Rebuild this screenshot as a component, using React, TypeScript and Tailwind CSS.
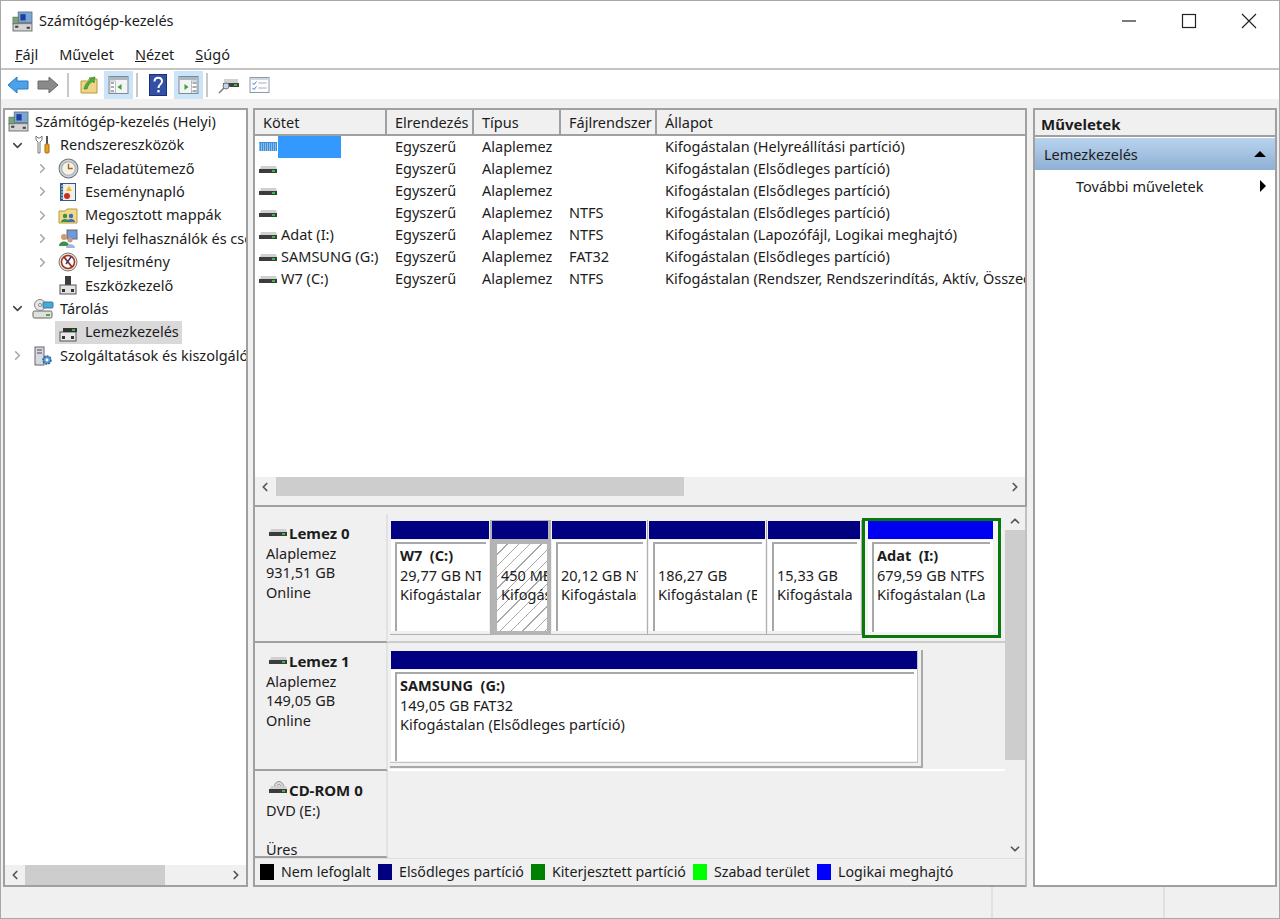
import { ChevronDown, ChevronRight, ChevronLeft, ChevronUp } from "lucide-react";

// ============================================
// Icons
// ============================================

const DriveIcon = ({ cd = false }: { cd?: boolean }) => (
  <svg width="20" height="16" viewBox="0 0 20 16" className="shrink-0">
    {cd && (
      <g>
        <circle cx="11" cy="5" r="4.5" fill="#d8d8d8" stroke="#9a9a9a" />
        <circle cx="11" cy="5" r="1.5" fill="#fff" stroke="#9a9a9a" />
      </g>
    )}
    <path d="M2 8 L3 5 H18 L19 8 Z" fill="#d0d0d0" />
    <rect x="1" y="8" width="18" height="4" fill="#3c3c3c" />
    <rect x="14" y="9" width="3" height="2" fill="#30c040" />
  </svg>
);

const BlueDriveIcon = () => (
  <svg width="20" height="16" viewBox="0 0 20 16" className="shrink-0">
    <rect x="1" y="3" width="18" height="9" fill="#3f8fd8" />
    <path d="M1 5h18M1 7h18M1 9h18M1 11h18" stroke="#d6ebfb" strokeDasharray="1 1" />
  </svg>
);

const ComputerIcon = () => (
  <svg width="21" height="21" viewBox="0 0 20 20" className="shrink-0">
    <rect x="6" y="1" width="13" height="10" fill="#7aa7d8" stroke="#6a7b8c" />
    <rect x="8" y="3" width="5" height="6" fill="#1f3f9f" />
    <rect x="1" y="12" width="18" height="7" fill="#d4d4d4" stroke="#777" />
    <rect x="3" y="14" width="3" height="2" fill="#444" />
    <rect x="14" y="15" width="3" height="2" fill="#444" />
    <rect x="1" y="6" width="5" height="6" fill="#6cae6c" stroke="#777" />
  </svg>
);

const ToolsIcon = () => (
  <svg width="18" height="20" viewBox="0 0 18 20" className="shrink-0">
    <path d="M2 1 V5 L4 7 V18 H6 V7 L8 5 V1 L6 3 H4 Z" fill="#fff" stroke="#777" />
    <rect x="12" y="1" width="2" height="8" fill="#555" />
    <rect x="11" y="9" width="4" height="9" rx="1" fill="#e8a020" stroke="#a56c10" />
  </svg>
);

const ClockIcon = () => (
  <svg width="21" height="21" viewBox="0 0 20 20" className="shrink-0">
    <circle cx="10" cy="10" r="9" fill="#c8d4e0" stroke="#777" />
    <circle cx="10" cy="10" r="6.5" fill="#f6f2e4" stroke="#aaa" />
    <path d="M10 5.5 V10 H14" stroke="#a06a10" strokeWidth="1.3" fill="none" />
  </svg>
);

const LogIcon = () => (
  <svg width="20" height="20" viewBox="0 0 20 20" className="shrink-0">
    <rect x="2" y="1" width="16" height="18" fill="#2f5a90" />
    <rect x="5" y="2" width="12" height="16" fill="#f4efe0" />
    <path d="M11 4 L14 9 H8 Z" fill="#e8c020" />
    <circle cx="9" cy="14" r="3" fill="#c83020" />
    <path d="M3 4h3M3 7h3M3 10h3M3 13h3M3 16h3" stroke="#cdd" />
  </svg>
);

const SharedIcon = () => (
  <svg width="20" height="20" viewBox="0 0 20 20" className="shrink-0">
    <path d="M1 6 H7 L9 4 H19 V18 H1 Z" fill="#f1d98a" stroke="#b89a40" />
    <circle cx="7" cy="11" r="2.2" fill="#3d8f4a" />
    <path d="M3 17 C3 13 11 13 11 17 Z" fill="#3d8f4a" />
    <circle cx="13" cy="11" r="2.2" fill="#3a6fb0" />
    <path d="M9 17 C9 13 17 13 17 17 Z" fill="#3a6fb0" />
  </svg>
);

const UsersIcon = () => (
  <svg width="20" height="20" viewBox="0 0 20 20" className="shrink-0">
    <rect x="9" y="1" width="10" height="9" fill="#6f9bd6" stroke="#667" />
    <circle cx="6" cy="8" r="3" fill="#d09a70" />
    <path d="M1 17 C1 11 11 11 11 17 Z" fill="#3d8f4a" />
    <circle cx="12" cy="11" r="2.5" fill="#c89a80" />
    <path d="M8 19 C8 14 17 14 17 19 Z" fill="#9cb8e0" />
  </svg>
);

const PerfIcon = () => (
  <svg width="20" height="20" viewBox="0 0 20 20" className="shrink-0">
    <circle cx="10" cy="10" r="9" fill="#e8e4d8" stroke="#777" />
    <circle cx="10" cy="10" r="6.5" fill="#fff" stroke="#a03020" strokeWidth="1.5" />
    <path d="M6 5 L14 15" stroke="#a03020" strokeWidth="2" />
    <path d="M13 5 L8 12" stroke="#2a3f80" strokeWidth="1.5" />
  </svg>
);

const DeviceIcon = () => (
  <svg width="20" height="20" viewBox="0 0 20 20" className="shrink-0">
    <rect x="7" y="1" width="6" height="9" fill="#3c3c3c" />
    <rect x="2" y="10" width="16" height="9" fill="#e4e4e4" stroke="#555" />
    <rect x="4" y="14" width="3" height="3" fill="#333" />
    <rect x="13" y="14" width="3" height="3" fill="#333" />
  </svg>
);

const StorageIcon = () => (
  <svg width="22" height="22" viewBox="0 0 22 22" className="shrink-0">
    <rect x="1" y="13" width="19" height="7" rx="1.5" fill="#dde3d8" stroke="#666" />
    <rect x="14" y="16" width="4" height="2" fill="#50a050" />
    <circle cx="8" cy="7" r="5.5" fill="#e6e6e6" stroke="#888" />
    <circle cx="8" cy="7" r="1.5" fill="#fff" stroke="#888" />
    <rect x="11" y="4" width="10" height="6" rx="1" fill="#49a9d6" stroke="#3b7a9c" />
  </svg>
);

const DiskMgmtIcon = () => (
  <svg width="20" height="20" viewBox="0 0 20 20" className="shrink-0">
    <rect x="2" y="10" width="16" height="9" fill="#e8e8e8" stroke="#555" />
    <rect x="4" y="14" width="3" height="3" fill="#333" />
    <rect x="13" y="14" width="3" height="3" fill="#333" />
    <rect x="5" y="6" width="14" height="4" fill="#333" />
    <rect x="14" y="7" width="3" height="2" fill="#30c040" />
  </svg>
);

const ServicesIcon = () => (
  <svg width="20" height="20" viewBox="0 0 20 20" className="shrink-0">
    <rect x="2" y="1" width="9" height="18" fill="#d6dadf" stroke="#666" />
    <path d="M4 4h5M4 7h5" stroke="#445" />
    <circle cx="14" cy="14" r="4" fill="#5d9ad8" stroke="#2c5f92" strokeWidth="1.5" strokeDasharray="2 1" />
    <circle cx="14" cy="14" r="1.4" fill="#fff" />
  </svg>
);

const ArrowIcon = ({ back, on }: { back?: boolean; on: boolean }) => (
  <svg width="22" height="20" viewBox="0 0 22 20">
    <path
      d={back ? "M1 10 L10 2 V6 H21 V14 H10 V18 Z" : "M21 10 L12 2 V6 H1 V14 H12 V18 Z"}
      fill={on ? "#4aa3e8" : "#8a8a8a"}
      stroke={on ? "#2a78c0" : "#6a6a6a"}
      strokeLinejoin="round"
    />
  </svg>
);

const FolderUpIcon = () => (
  <svg width="20" height="20" viewBox="0 0 20 20">
    <path d="M2 6 H9 L10 4 H18 V18 H2 Z" fill="#f0d488" stroke="#b89a40" />
    <path d="M5 14 C6 9 9 6 12 5 L10 3 L16 2 L15 8 L13.5 6.5 C11 8 9 10 8 14 Z" fill="#4caf3c" stroke="#2e7f25" strokeWidth="0.6" />
  </svg>
);

const PaneIcon = ({ right }: { right?: boolean }) => (
  <svg width="21" height="18" viewBox="0 0 20 18">
    <rect x="0.5" y="0.5" width="19" height="17" fill="#f4f4f4" stroke="#7a8a96" />
    <rect x="1" y="1" width="18" height="3" fill="#aab8c4" />
    <rect x={right ? 13 : 1.5} y="5" width="5.5" height="12" fill="#fff" stroke="#8c9aa6" strokeWidth="0.6" />
    <path d={right ? "M6 8 L10 11 L6 14 Z" : "M13 8 L9 11 L13 14 Z"} fill="#3aa040" />
    <path d={right ? "M14 7h4M14 11h4M14 15h4" : "M2.5 7h3M2.5 11h3M2.5 15h3"} stroke="#556" />
  </svg>
);

const HelpIcon = () => (
  <svg width="18" height="22" viewBox="0 0 18 22">
    <rect x="0.5" y="0.5" width="17" height="21" fill="#3350a8" stroke="#1d2f70" />
    <path d="M5.5 7.5 C5.5 2.5 13 2.5 13 7.5 C13 10 9.5 10.5 9.5 14" stroke="#fff" strokeWidth="2" fill="none" />
    <rect x="8.4" y="16" width="2.2" height="2.4" fill="#fff" />
  </svg>
);

const ScanIcon = () => (
  <svg width="22" height="18" viewBox="0 0 22 18">
    <path d="M6 3 H20 V7 H6 Z" fill="#d0d0d0" />
    <rect x="5" y="7" width="16" height="4" fill="#404040" />
    <rect x="16" y="8" width="3" height="2" fill="#30c040" />
    <circle cx="8" cy="10" r="3" fill="#bcd6ea" stroke="#777" />
    <path d="M6 12 L1 17" stroke="#777" strokeWidth="1.5" />
  </svg>
);

const ChecklistIcon = () => (
  <svg width="21" height="16" viewBox="0 0 20 16">
    <rect x="0.5" y="0.5" width="19" height="15" fill="#fdfdfd" stroke="#8c9aa6" />
    <rect x="1" y="1" width="18" height="2" fill="#d0d8e0" />
    <path d="M3 6 L4.5 7.5 L7 4.5M3 11 L4.5 12.5 L7 9.5" stroke="#3a7fd0" fill="none" />
    <path d="M9 6h8M9 11h8" stroke="#aab" />
  </svg>
);

// ============================================
// Tree
// ============================================

type TreeItem = { label: string; depth: 0 | 1 | 2; arrow?: "open" | "closed"; icon: React.ReactNode; selected?: boolean };

const treeItems: TreeItem[] = [
  { label: "Számítógép-kezelés (Helyi)", depth: 0, icon: <ComputerIcon /> },
  { label: "Rendszereszközök", depth: 1, arrow: "open", icon: <ToolsIcon /> },
  { label: "Feladatütemező", depth: 2, arrow: "closed", icon: <ClockIcon /> },
  { label: "Eseménynapló", depth: 2, arrow: "closed", icon: <LogIcon /> },
  { label: "Megosztott mappák", depth: 2, arrow: "closed", icon: <SharedIcon /> },
  { label: "Helyi felhasználók és csoportok", depth: 2, arrow: "closed", icon: <UsersIcon /> },
  { label: "Teljesítmény", depth: 2, arrow: "closed", icon: <PerfIcon /> },
  { label: "Eszközkezelő", depth: 2, icon: <DeviceIcon /> },
  { label: "Tárolás", depth: 1, arrow: "open", icon: <StorageIcon /> },
  { label: "Lemezkezelés", depth: 2, icon: <DiskMgmtIcon />, selected: true },
  { label: "Szolgáltatások és kiszolgálói alkalmazások", depth: 1, arrow: "closed", icon: <ServicesIcon /> },
];

const TreeRow = ({ item }: { item: TreeItem }) => {
  const pad = item.depth === 2 ? "pl-[27px]" : "pl-[2px]";
  return (
    <div className={`flex h-[23.4px] items-center whitespace-nowrap ${pad}`}>
      {item.depth > 0 && (
        <span className="mr-[5px] flex w-[20px] shrink-0 items-center justify-center">
          {item.arrow === "open" && <ChevronDown size={15} strokeWidth={2.5} className="text-[#444]" />}
          {item.arrow === "closed" && <ChevronRight size={15} strokeWidth={2.5} className="text-[#a6a6a6]" />}
        </span>
      )}
      <span className={`flex items-center ${item.selected ? "-ml-[2px] h-[23px] w-[127px] bg-[#d9d9d9] pl-[2px]" : ""}`}>
        <span className="flex w-[22px] shrink-0 items-center justify-center">{item.icon}</span>
        <span className="ml-[6px]">{item.label}</span>
      </span>
    </div>
  );
};

// ============================================
// Volume list
// ============================================

const cols = [
  { label: "Kötet", w: "w-[132px]" },
  { label: "Elrendezés", w: "w-[87px]" },
  { label: "Típus", w: "w-[87px]" },
  { label: "Fájlrendszer", w: "w-[96px]" },
  { label: "Állapot", w: "flex-1" },
];

const volumes = [
  { name: "", fs: "", status: "Kifogástalan (Helyreállítási partíció)", selected: true },
  { name: "", fs: "", status: "Kifogástalan (Elsődleges partíció)" },
  { name: "", fs: "", status: "Kifogástalan (Elsődleges partíció)" },
  { name: "", fs: "NTFS", status: "Kifogástalan (Elsődleges partíció)" },
  { name: "Adat (I:)", fs: "NTFS", status: "Kifogástalan (Lapozófájl, Logikai meghajtó)" },
  { name: "SAMSUNG (G:)", fs: "FAT32", status: "Kifogástalan (Elsődleges partíció)" },
  { name: "W7 (C:)", fs: "NTFS", status: "Kifogástalan (Rendszer, Rendszerindítás, Aktív, Összeomlási kiírás)" },
];

// ============================================
// Disk map
// ============================================

type Partition = { w: string; title?: string; size: string; status: string; hatched?: boolean; logical?: boolean };

const disk0: Partition[] = [
  { w: "w-[101px]", title: "W7  (C:)", size: "29,77 GB NTFS", status: "Kifogástalan (Rendszer)" },
  { w: "w-[60px]", size: "450 MB", status: "Kifogástalan", hatched: true },
  { w: "w-[97px]", size: "20,12 GB NTFS", status: "Kifogástalan (Elsődleges)" },
  { w: "w-[119px]", size: "186,27 GB", status: "Kifogástalan (Elsődleges)" },
  { w: "w-[95px]", size: "15,33 GB", status: "Kifogástalan (Elsődleges)" },
  { w: "w-[139px]", title: "Adat  (I:)", size: "679,59 GB NTFS", status: "Kifogástalan (Lapozófájl)", logical: true },
];

const PartitionText = ({ p }: { p: Partition }) => (
  <div className="overflow-hidden whitespace-pre leading-[19.5px]">
    <div className="h-[19.5px] font-bold">{p.title}</div>
    <div>{p.size}</div>
    <div>{p.status}</div>
  </div>
);

const PartitionBody = ({ p }: { p: Partition }) => {
  if (p.hatched) {
    return (
      <>
        <div className="-mx-[1px] flex shrink-0 px-[1px]">
          <div className="h-[18px] w-[56px] bg-[#000080]" />
        </div>
        <div className="min-h-0 flex-1 pt-[5px] pl-[5px] pr-[4px] pb-[3px]">
          <div className="h-full bg-[repeating-linear-gradient(135deg,#fff_0px,#fff_7px,#a8a8a8_7px,#a8a8a8_8px)] pl-[4px] pt-[2px]">
            <PartitionText p={p} />
          </div>
        </div>
      </>
    );
  }
  return (
    <>
      <div className={`h-[18px] shrink-0 ${p.logical ? "bg-[#0000f0]" : "bg-[#000080]"}`} />
      <div className="mt-[1px] flex min-h-0 flex-1 flex-col bg-white pl-[4px] pr-[3px] pt-[2px]">
        <div className="min-h-0 flex-1 overflow-hidden border-t-2 border-l-2 border-[#a8a8a8] bg-white pl-[3px] pr-[5px] pt-[2px]">
          <PartitionText p={p} />
        </div>
      </div>
    </>
  );
};

const PartitionBox = ({ p }: { p: Partition }) => {
  if (p.logical) {
    return (
      <div className={`-mt-[2px] flex h-[120px] shrink-0 flex-col border-[3px] border-[#087a0c] bg-[#f4f4f4] pl-[3px] pr-[5px] pb-[3px] ${p.w}`}>
        <PartitionBody p={p} />
      </div>
    );
  }
  if (p.hatched) {
    return (
      <div className={`flex h-[115px] shrink-0 flex-col bg-[#b4b4b4] pt-[1px] pl-[1px] pb-[1px] ${p.w}`}>
        <PartitionBody p={p} />
      </div>
    );
  }
  return (
    <div className={`flex h-[115px] shrink-0 flex-col border-r border-b border-[#b0b0b0] bg-[#f0f0f0] pt-[1px] pl-[1px] pr-[1px] pb-[3px] ${p.w}`}>
      <PartitionBody p={p} />
    </div>
  );
};

const DiskLabel = ({ name, lines, cd, pt }: { name: string; lines: string[]; cd?: boolean; pt: string }) => (
  <div className={`w-[133px] shrink-0 self-stretch border-r-2 border-b-2 border-r-[#e2e2e2] border-b-[#a0a0a0] bg-[#f0f0f0] pl-[11px] leading-[19.5px] ${pt}`}>
    <div className="flex items-center">
      <span className="-mt-[4px] ml-[2px]">
        <DriveIcon cd={cd} />
      </span>
      <span className="ml-[1px] text-[15px] font-bold">{name}</span>
    </div>
    {lines.map((line, i) => (
      <div key={i} className="h-[19.5px]">
        {line}
      </div>
    ))}
  </div>
);

const legend = [
  { color: "bg-black", label: "Nem lefoglalt" },
  { color: "bg-[#000080]", label: "Elsődleges partíció" },
  { color: "bg-[#008000]", label: "Kiterjesztett partíció" },
  { color: "bg-[#00ff00]", label: "Szabad terület" },
  { color: "bg-[#0000ff]", label: "Logikai meghajtó" },
];

// ============================================
// Main Component
// ============================================

export default function App() {
  return (
    <div className="flex h-[919px] w-[1280px] flex-col overflow-hidden border border-[#a8a8a8] bg-[#f0f0f0] font-['Noto_Sans','Open_Sans',sans-serif] text-[14.5px] text-[#1c1c1c]">
      {/* Title bar */}
      <div className="flex h-[40px] shrink-0 items-center bg-white pl-[11px]">
        <ComputerIcon />
        <span className="-mt-[1px] ml-[6px]">Számítógép-kezelés</span>
        <div className="ml-auto flex items-center">
          <svg width="16" height="16" viewBox="0 0 16 16" className="mr-[44px]"><path d="M1 8h14" stroke="#222" strokeWidth="1.2" /></svg>
          <svg width="16" height="16" viewBox="0 0 16 16" className="mr-[44px]"><rect x="1.5" y="1.5" width="13" height="13" fill="none" stroke="#222" strokeWidth="1.2" /></svg>
          <svg width="16" height="16" viewBox="0 0 16 16" className="mr-[22px]"><path d="M1 1l14 14M15 1L1 15" stroke="#222" strokeWidth="1.2" /></svg>
        </div>
      </div>

      {/* Menu */}
      <div className="flex h-[29px] shrink-0 items-center gap-[21px] border-b-2 border-[#c4c4c4] bg-white pl-[14px]">
        <span><u>F</u>ájl</span>
        <span>Mű<u>v</u>elet</span>
        <span><u>N</u>ézet</span>
        <span><u>S</u>úgó</span>
      </div>

      {/* Toolbar */}
      <div className="flex h-[29px] shrink-0 items-center bg-white pl-[6px]">
        <ArrowIcon back on />
        <span className="ml-[8px]"><ArrowIcon on={false} /></span>
        <span className="ml-[8px] h-[24px] w-[2px] bg-[#c8c8c8]" />
        <span className="ml-[10px]"><FolderUpIcon /></span>
        <span className="ml-[5px] flex h-[28px] w-[29px] items-center justify-center bg-[#cce4f7]"><PaneIcon /></span>
        <span className="ml-[3px] h-[24px] w-[2px] bg-[#c8c8c8]" />
        <span className="ml-[11px]"><HelpIcon /></span>
        <span className="ml-[7px] flex h-[28px] w-[29px] items-center justify-center bg-[#cce4f7]"><PaneIcon right /></span>
        <span className="ml-[3px] h-[24px] w-[2px] bg-[#c8c8c8]" />
        <span className="ml-[10px]"><ScanIcon /></span>
        <span className="ml-[9px]"><ChecklistIcon /></span>
      </div>

      {/* Panes */}
      <div className="flex min-h-0 flex-1 gap-[5px] px-[2px] pt-[9px]">
        {/* Left tree */}
        <div className="flex w-[245px] shrink-0 flex-col overflow-hidden border-2 border-[#a0a0a0] bg-white">
          <div className="min-h-0 flex-1 overflow-hidden">
            {treeItems.map((item) => (
              <TreeRow key={item.label} item={item} />
            ))}
          </div>
          <div className="flex h-[20px] shrink-0 items-center bg-[#f0f0f0]">
            <ChevronLeft size={14} strokeWidth={3} className="ml-[3px] text-[#555]" />
            <div className="ml-[3px] h-[20px] w-[140px] bg-[#cdcdcd]" />
            <ChevronRight size={14} strokeWidth={3} className="ml-auto mr-[3px] text-[#555]" />
          </div>
        </div>

        {/* Center */}
        <div className="flex w-[774px] shrink-0 flex-col">
          {/* Volume list */}
          <div className="flex h-[399px] shrink-0 flex-col border-2 border-[#a0a0a0] bg-white">
            <div className="flex h-[26px] shrink-0 border-b-2 border-[#a0a0a0] bg-[#f0f0f0]">
              {cols.map((c) => (
                <div key={c.label} className={`flex items-center border-r-2 border-[#a0a0a0] pl-[8px] pt-[2px] last:border-r-0 ${c.w}`}>
                  {c.label}
                </div>
              ))}
            </div>
            <div className="min-h-0 flex-1 overflow-hidden">
              {volumes.map((v, i) => (
                <div key={i} className="flex h-[22px] items-center whitespace-nowrap">
                  <div className="flex w-[132px] items-center pl-[3px]">
                    {v.selected ? <BlueDriveIcon /> : <DriveIcon />}
                    {v.selected ? (
                      <span className="h-[22px] w-[63px] bg-[#3399ff]" />
                    ) : (
                      <span className="ml-[3px]">{v.name}</span>
                    )}
                  </div>
                  <div className="w-[87px] pl-[8px]">Egyszerű</div>
                  <div className="w-[87px] pl-[8px]">Alaplemez</div>
                  <div className="w-[96px] pl-[8px]">{v.fs}</div>
                  <div className="min-w-0 flex-1 overflow-hidden pl-[8px]">{v.status}</div>
                </div>
              ))}
            </div>
            <div className="flex h-[28px] shrink-0 items-start bg-[#f0f0f0]">
              <ChevronLeft size={14} strokeWidth={3} className="ml-[3px] mt-[3px] text-[#555]" />
              <div className="ml-[4px] h-[19px] w-[408px] bg-[#cdcdcd]" />
              <ChevronRight size={14} strokeWidth={3} className="ml-auto mr-[3px] mt-[3px] text-[#555]" />
            </div>
          </div>

          {/* Disk map */}
          <div className="flex min-h-0 flex-1 flex-col border-x-2 border-b-2 border-l-[#a0a0a0] border-r-[#c0c0c0] border-b-[#a0a0a0] bg-[#f0f0f0] pt-[7px]">
            <div className="flex min-h-0 flex-1">
              <div className="min-w-0 flex-1 overflow-hidden">
                <div className="flex h-[129px]">
                  <DiskLabel name="Lemez 0" pt="pt-[10px]" lines={["Alaplemez", "931,51 GB", "Online"]} />
                  <div className="min-w-0 flex-1 border-b-2 border-[#cccccc] pl-[2px] pt-[6px]">
                    <div className="flex items-start">
                      {disk0.map((p, i) => (
                        <PartitionBox key={i} p={p} />
                      ))}
                    </div>
                  </div>
                </div>
                <div className="flex h-[128px]">
                  <DiskLabel name="Lemez 1" pt="pt-[9px]" lines={["Alaplemez", "149,05 GB", "Online"]} />
                  <div className="min-w-0 flex-1 border-b-2 border-white pl-[2px] pt-[7px]">
                    <div className="h-[118px] w-[533px] border-r-2 border-b-2 border-[#a8a8a8] pr-[3px] pb-[3px]">
                      <div className="h-full border-r border-b border-[#c4c4c4]">
                        <div className="flex h-full flex-col p-[1px] pr-0">
                          <PartitionBody p={{ w: "", title: "SAMSUNG  (G:)", size: "149,05 GB FAT32", status: "Kifogástalan (Elsődleges partíció)" }} />
                        </div>
                      </div>
                    </div>
                  </div>
                </div>
                <div className="flex h-[87px]">
                  <DiskLabel name="CD-ROM 0" pt="pt-[10px] border-b-0" cd lines={["DVD (E:)", "", "Üres"]} />
                </div>
              </div>
              <div className="flex w-[20px] shrink-0 flex-col items-center bg-[#f0f0f0]">
                <ChevronUp size={14} strokeWidth={3} className="text-[#555]" />
                <div className="mt-[2px] h-[230px] w-full bg-[#cdcdcd]" />
                <ChevronDown size={14} strokeWidth={3} className="mt-auto mb-[2px] text-[#555]" />
              </div>
            </div>
            <div className="flex h-[27px] shrink-0 items-center gap-[7px] border-t border-[#e0e0e0] bg-[#f0f0f0] pl-[5px] text-[14.2px]">
              {legend.map((l) => (
                <div key={l.label} className="flex items-center gap-[7px]">
                  <span className={`h-[16px] w-[14px] ${l.color}`} />
                  <span>{l.label}</span>
                </div>
              ))}
            </div>
          </div>
        </div>

        {/* Actions */}
        <div className="ml-[1px] flex min-w-0 flex-1 flex-col border-2 border-[#a0a0a0] bg-white">
          <div className="flex h-[27px] shrink-0 items-center border-b-2 border-[#a0a0a0] bg-[#f0f0f0] pl-[6px] pt-[3px] text-[15px] font-bold">Műveletek</div>
          <div className="mt-[1px] flex h-[32px] shrink-0 items-center justify-between bg-gradient-to-b from-[#b9d3ee] to-[#8eb0d4] pl-[9px] pr-[9px]">
            <span className="pt-[2px]">Lemezkezelés</span>
            <span className="h-0 w-0 border-x-[6px] border-b-[6px] border-x-transparent border-b-black" />
          </div>
          <div className="flex h-[31px] shrink-0 items-center justify-between pl-[41px] pr-[9px]">
            <span className="pt-[2px]">További műveletek</span>
            <span className="h-0 w-0 border-y-[6px] border-l-[6px] border-y-transparent border-l-black" />
          </div>
        </div>
      </div>

      {/* Status bar */}
      <div className="flex h-[31px] shrink-0 bg-[#f0f0f0]">
        <div className="w-[992px] border-r-2 border-[#e0e0e0]" />
        <div className="w-[172px] border-r-2 border-[#e0e0e0]" />
      </div>
    </div>
  );
}
